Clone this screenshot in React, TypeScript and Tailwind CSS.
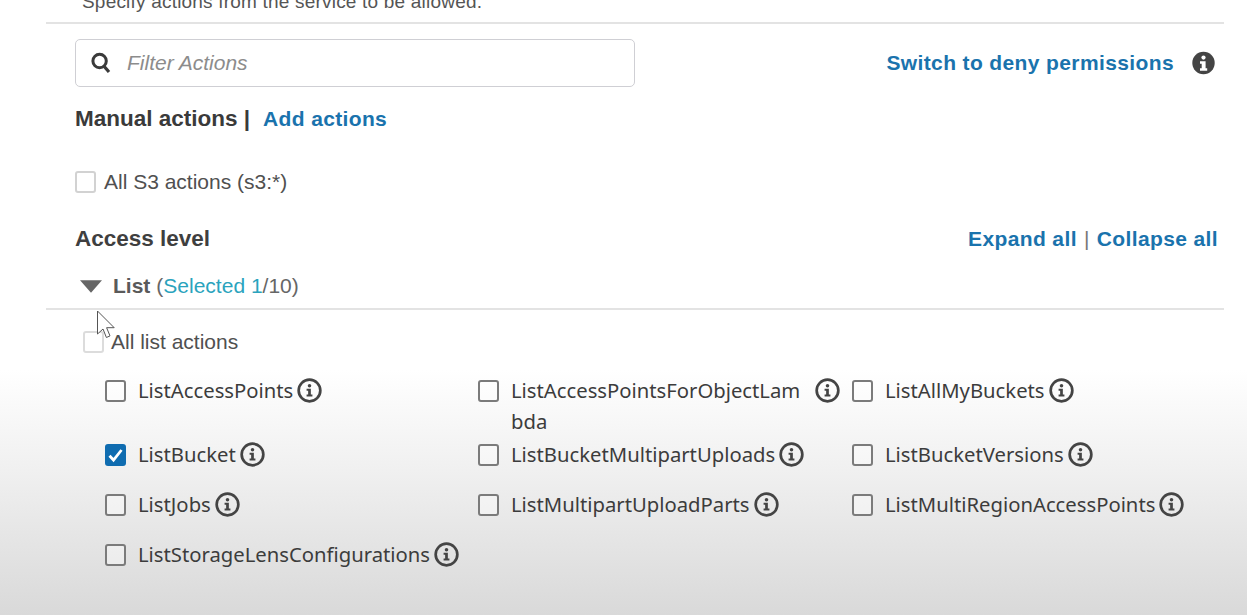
const arial = "font-['Liberation_Sans',Arial,sans-serif]";

function InfoOutline() {
  return (
    <svg width="25" height="25" viewBox="0 0 24 24" fill="none" aria-hidden="true" className="shrink-0">
      <circle cx="12" cy="12" r="10.4" stroke="#444" strokeWidth="2.6" />
      <circle cx="12" cy="7.4" r="1.7" fill="#444" />
      <path d="M9.2 10.4h4.1v5.4h1.5v1.9H9.2v-1.9h1.5v-3.5H9.2z" fill="#444" />
    </svg>
  );
}

function InfoSolid() {
  return (
    <svg width="23" height="24" viewBox="0 0 23 24" aria-hidden="true" className="shrink-0">
      <circle cx="11.5" cy="12" r="11.2" fill="#444" />
      <circle cx="11.5" cy="6.6" r="2.1" fill="#fff" />
      <path d="M8 10.2h5.6v7h1.6v2.6H8v-2.6h1.7v-4.4H8z" fill="#fff" />
    </svg>
  );
}

function SearchIcon() {
  return (
    <svg width="20" height="22" viewBox="0 0 20 22" fill="none" aria-hidden="true">
      <circle cx="8.6" cy="9" r="6.7" stroke="#3a3a3a" strokeWidth="3" />
      <path d="M13 14.2l5 5.8" stroke="#3a3a3a" strokeWidth="3.2" />
    </svg>
  );
}

function Box({ checked }: { checked?: boolean }) {
  if (checked) {
    return (
      <span className="flex h-[22px] w-[21px] shrink-0 items-center justify-center rounded-[3px] bg-[#0f6cb0]">
        <svg width="17" height="17" viewBox="0 0 17 17" fill="none" aria-hidden="true">
          <path d="M2.5 8.8l4 4.2 8-10" stroke="#fff" strokeWidth="2.8" />
        </svg>
      </span>
    );
  }
  return <span className="block h-[22px] w-[21px] shrink-0 rounded-[3px] border-2 border-[#7b7b7b] bg-white/40" />;
}

function Action({ name, rest, checked, wrapGap }: { name: string; rest?: string; checked?: boolean; wrapGap?: boolean }) {
  return (
    <div className="flex items-start">
      <div className="mt-[5px]">
        <Box checked={checked} />
      </div>
      <div className="ml-[12px] text-[20.25px] leading-[31px] text-[#3c3c3c]">
        <div className="flex items-center">
          <span>{name}</span>
          <span className={wrapGap ? "ml-[15px]" : "ml-[4px]"}>
            <InfoOutline />
          </span>
        </div>
        {rest && <div>{rest}</div>}
      </div>
    </div>
  );
}

export default function App() {
  return (
    <div className={`relative h-[615px] w-[1247px] overflow-hidden bg-[linear-gradient(to_bottom,#ffffff_0,#ffffff_370px,#f0f0f0_470px,#d9d9d9_615px)] ${arial}`}>
      <div className="-mt-[10px] ml-[46px] w-[1178px] border-b-2 border-[#e3e3e3] pb-[9px] pl-[36px] text-[19px] leading-[23px] tracking-[0.2px] text-[#555]">
        Specify actions from the service to be allowed.
      </div>

      <div className="ml-[75px] mr-[29px]">
        <div className="mt-[15px] flex items-center justify-between">
          <div className="flex h-[48px] w-[560px] items-center rounded-[5px] border border-[#cfcfd4] bg-white pl-[15px]">
            <SearchIcon />
            <span className="ml-[16px] text-[21px] italic text-[#8c8c8c]">Filter Actions</span>
          </div>
          <div className="mr-[3px] flex items-center">
            <span className="text-[21px] font-bold tracking-[0.38px] text-[#1a73ad]">Switch to deny permissions</span>
            <span className="ml-[18px]">
              <InfoSolid />
            </span>
          </div>
        </div>

        <div className="mt-[16px] flex h-[32px] items-center font-bold">
          <span className="text-[22.5px] text-[#3a3a3a]">Manual actions |</span>
          <span className="ml-[13px] text-[21px] tracking-[0.35px] text-[#1a73ad]">Add actions</span>
        </div>

        <div className="mt-[31px] flex h-[32px] items-center">
          <span className="h-[22px] w-[21px] rounded-[3px] border-2 border-[#d2d2d2]" />
          <span className="ml-[8px] text-[21px] text-[#505050]">All S3 actions (s3:*)</span>
        </div>

        <div className="mt-[25px] flex h-[32px] items-center justify-between">
          <span className="text-[22.5px] font-bold text-[#3f3f3f]">Access level</span>
          <div className="flex items-center text-[21px] font-bold tracking-[0.38px] text-[#1a73ad]">
            <span>Expand all</span>
            <span className="mx-[7px] font-normal text-[#777]">|</span>
            <span>Collapse all</span>
          </div>
        </div>
      </div>

      <div className="ml-[46px] mt-[15px] w-[1178px] border-b-2 border-[#e3e3e3] pb-[6px]">
        <div className="flex h-[32px] items-center pl-[34px] text-[21px]">
          <svg width="22" height="13" viewBox="0 0 23 13" aria-hidden="true">
            <path d="M0 0h23L11.5 13z" fill="#666" />
          </svg>
          <span className="ml-[11px] font-bold text-[#5a5a5a]">List</span>
          <span className="ml-[6px] text-[#666]">(</span>
          <span className="text-[#2aa3bd]">Selected 1</span>
          <span className="text-[#666]">/10)</span>
        </div>
      </div>

      <div className="ml-[83px] mt-[16px] flex h-[32px] items-center">
        <span className="h-[22px] w-[21px] rounded-[3px] border-2 border-[#dcdcdc]" />
        <span className="ml-[7px] text-[21px] text-[#505050]">All list actions</span>
      </div>

      <div className="ml-[105px] mt-[17px] grid w-[1120px] grid-cols-[373px_374px_1fr] font-['Noto_Sans',sans-serif]">
        <div className="h-[64px]"><Action name="ListAccessPoints" /></div>
        <div className="h-[64px]"><Action name="ListAccessPointsForObjectLam" rest="bda" wrapGap /></div>
        <div className="h-[64px]"><Action name="ListAllMyBuckets" /></div>
        <div className="h-[50px]"><Action name="ListBucket" checked /></div>
        <div className="h-[50px]"><Action name="ListBucketMultipartUploads" /></div>
        <div className="h-[50px]"><Action name="ListBucketVersions" /></div>
        <div className="h-[50px]"><Action name="ListJobs" /></div>
        <div className="h-[50px]"><Action name="ListMultipartUploadParts" /></div>
        <div className="h-[50px]"><Action name="ListMultiRegionAccessPoints" /></div>
        <div className="col-span-3"><Action name="ListStorageLensConfigurations" /></div>
      </div>

      <svg width="22" height="32" viewBox="0 0 22 32" aria-hidden="true" className="absolute left-[96px] top-[310px]">
        <path d="M1.5 1v23l5.5-5 3.4 8.5 3.6-1.6-3.4-8.2h7.6z" fill="#fff" stroke="#555" strokeWidth="1" />
      </svg>
    </div>
  );
}
